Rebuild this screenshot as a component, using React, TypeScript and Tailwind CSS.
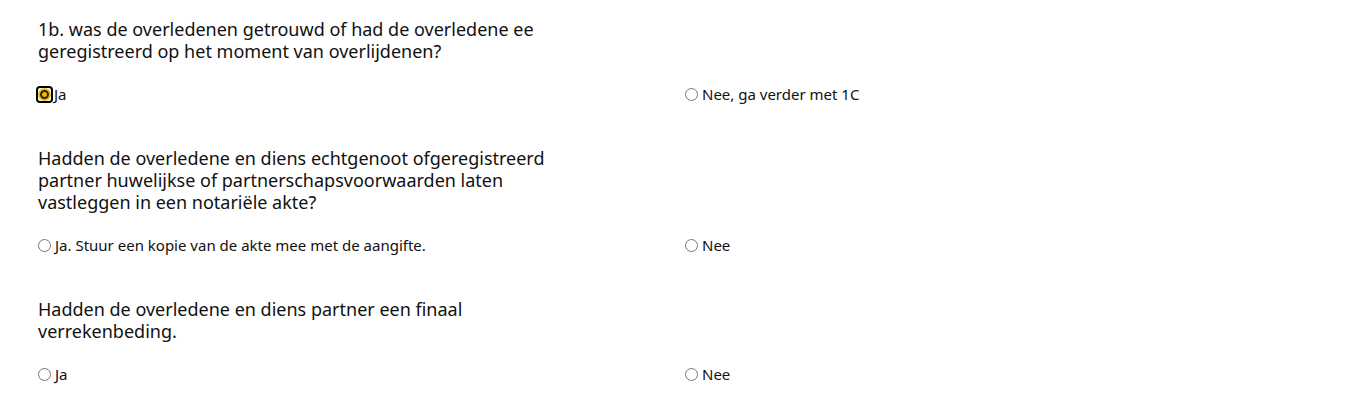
import React from "react";

type Option = { label: string; checked?: boolean };

type Question = {
  lines: string[];
  left: Option;
  right: Option;
};

const questions: Question[] = [
  {
    lines: ["1b. was de overledenen getrouwd of had de overledene ee", "geregistreerd op het moment van overlijdenen?"],
    left: { label: "Ja", checked: true },
    right: { label: "Nee, ga verder met 1C" }
  },
  {
    lines: [
      "Hadden de overledene en diens echtgenoot ofgeregistreerd",
      "partner huwelijkse of partnerschapsvoorwaarden laten",
      "vastleggen in een notariële akte?"
    ],
    left: { label: "Ja. Stuur een kopie van de akte mee met de aangifte." },
    right: { label: "Nee" }
  },
  {
    lines: ["Hadden de overledene en diens partner een finaal", "verrekenbeding."],
    left: { label: "Ja" },
    right: { label: "Nee" }
  }
];

function Radio({ label, checked }: Option) {
  return (
    <label className="flex h-5 items-center text-[15px] text-[#111]">
      {checked ? (
        <span className="-ml-[2px] mr-[1px] flex h-[17px] w-[17px] items-center justify-center rounded-[4px] border-2 border-black">
          <span className="flex h-[13px] w-[13px] items-center justify-center rounded-full bg-[#f0be00]">
            <span className="h-[9px] w-[9px] rounded-full border-2 border-[#2a2200] bg-[#f0be00]" />
          </span>
        </span>
      ) : (
        <span className="mr-[4px] h-[13px] w-[13px] rounded-full border border-[#767676] bg-white" />
      )}
      <span>{label}</span>
    </label>
  );
}

export default function App() {
  return (
    <div className="min-h-[402px] bg-white pl-[38px] pr-4 pt-[18px] font-['Noto_Sans','Open_Sans',sans-serif] text-[#111]">
      {questions.map((q, i) => (
        <div key={i} className={i > 0 ? "mt-[43px]" : ""}>
          <h3 className="whitespace-nowrap text-[18px] leading-[22px] font-normal">
            {q.lines.map((line, j) => (
              <div key={j}>{line}</div>
            ))}
          </h3>
          <div className="mt-[22px] grid grid-cols-[647px_1fr]">
            <Radio {...q.left} />
            <Radio {...q.right} />
          </div>
        </div>
      ))}
    </div>
  );
}
